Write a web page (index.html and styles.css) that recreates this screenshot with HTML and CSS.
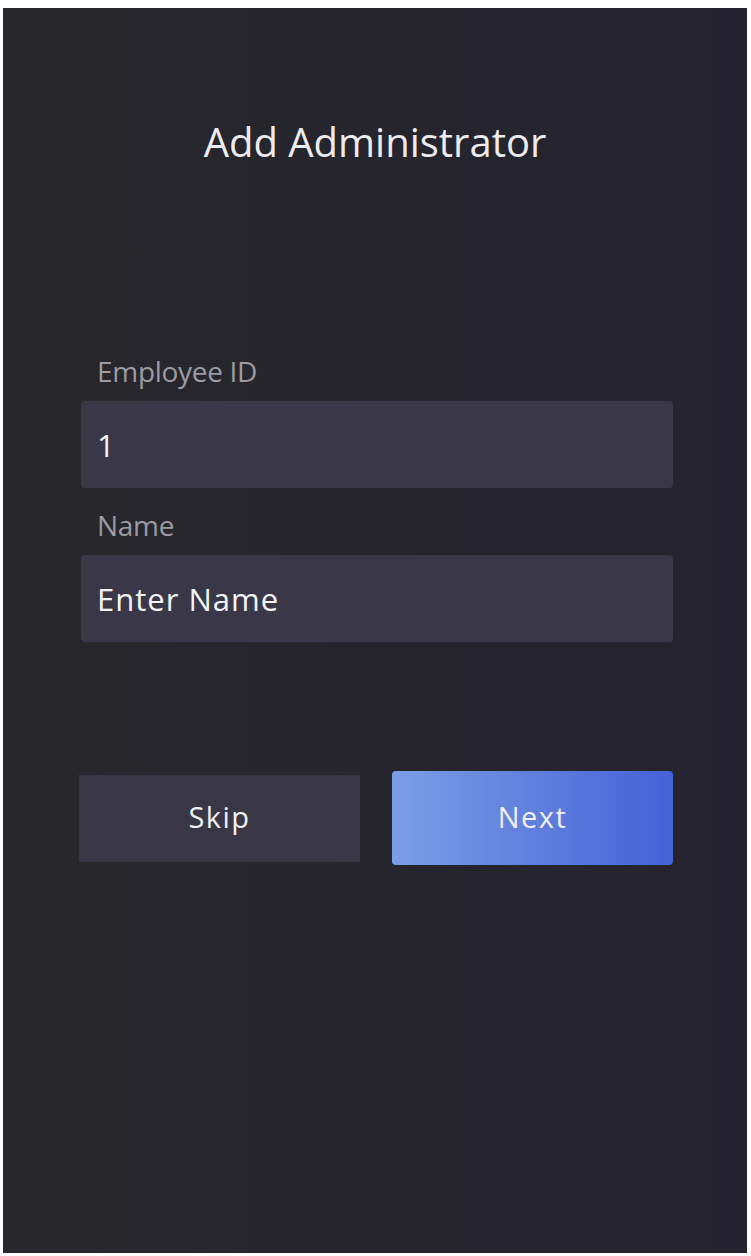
FILE: index.html
```html
<!doctype html>
<html>
  <head>
    <title>Add Administrator</title>
    <meta name="viewport" content="width=device-width, initial-scale=1" />
    <link rel="stylesheet" href="styles.css">
  </head>
  <body>
    <div class="screen">
      <h1>Add Administrator</h1>
      <form class="form">
        <label for="employeeId">Employee ID</label>
        <input type="text" id="employeeId" class="field" value="1">
        <label for="name">Name</label>
        <input type="text" id="name" class="field" placeholder="Enter Name">
        <div class="actions">
          <button type="button" class="btn skip">Skip</button>
          <button type="button" class="btn next">Next</button>
        </div>
      </form>
    </div>
  </body>
</html>
```

FILE: styles.css
```css
body {
  font-family: "Open Sans", sans-serif;
  background-color: white;
  margin: 0px;
}
.screen {
  margin: 8px 4px 0px 3px;
  height: 1245px;
  background: linear-gradient(to right, #27272b, #25232f);
  box-sizing: border-box;
  padding-top: 107px;
}
h1 {
  font-size: 40px;
  font-weight: normal;
  color: #ececf0;
  text-align: center;
  margin: 0px;
  line-height: 54px;
}
.form {
  display: flex;
  flex-direction: column;
  padding: 0px 74px 0px 78px;
  margin-top: 182px;
}
label {
  font-size: 28px;
  letter-spacing: -0.3px;
  color: #9c9ba3;
  margin-left: 16px;
  line-height: 40px;
  margin-bottom: 10px;
}
.field {
  font-family: inherit;
  font-size: 31px;
  letter-spacing: 1px;
  color: #f4f4f6;
  background-color: #3a3848;
  border: none;
  border-radius: 4px;
  height: 87px;
  padding: 0px 16px;
  margin-bottom: 17px;
  outline: none;
}
.field::placeholder {
  color: #f4f4f6;
}
.actions {
  display: flex;
  align-items: center;
  gap: 32px;
  margin-top: 112px;
}
.btn {
  font-family: inherit;
  font-size: 29px;
  letter-spacing: 1.5px;
  color: #f0f0f4;
  border: none;
  flex: 1;
  padding-bottom: 4px;
}
.skip {
  background-color: #393745;
  height: 87px;
  margin-left: -2px;
}
.next {
  background: linear-gradient(to right, #7c9de6, #4462d6);
  border-radius: 4px;
  height: 94px;
}
```
